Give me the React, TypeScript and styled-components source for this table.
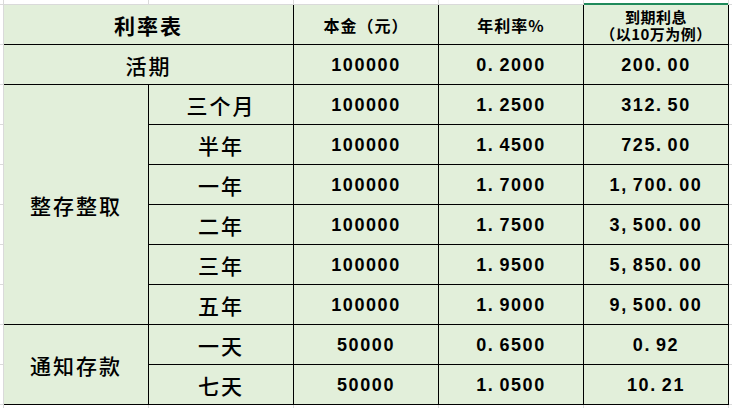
import React from 'react';
import styled, { createGlobalStyle } from 'styled-components';

const GlobalStyle = createGlobalStyle`
  html, body {
    margin: 0;
    padding: 0;
  }
  body {
    width: 732px;
    height: 408px;
    overflow: hidden;
    background-color: #ffffff;
    /* sheet gridlines around the table */
    background-image:
      repeating-linear-gradient(to right, #dadada 0 1px, transparent 1px 145px),
      repeating-linear-gradient(to bottom, #dadada 0 1px, transparent 1px 40px);
    background-position: 3px 0, 0 4px;
  }
`;

const Sheet = styled.div`
  padding: 5px 0 0 4px;
`;

const Table = styled.div`
  display: grid;
  grid-template-columns: repeat(5, 144px);
  grid-template-rows: repeat(10, 39px);
  gap: 1px;
  padding: 0 1px 1px 0;
  width: max-content;
  background-color: #000000;
`;

const Cell = styled.div<{ $col?: string; $row?: string; $selected?: boolean }>`
  grid-column: ${(p) => p.$col || 'auto'};
  grid-row: ${(p) => p.$row || 'auto'};
  background-color: #e2efda;
  display: flex;
  align-items: center;
  justify-content: center;
  text-align: center;
  color: #000000;
  box-shadow: ${(p) => (p.$selected ? '0 -2px 0 0 #1f8a5b' : 'none')};
`;

const Title = styled.span`
  font-family: 'Noto Sans CJK SC', sans-serif;
  font-size: 21px;
  font-weight: 700;
  letter-spacing: 2px;
`;

const Label = styled.span`
  font-family: 'Noto Sans CJK SC', sans-serif;
  font-size: 21px;
  font-weight: 500;
  letter-spacing: 2px;
`;

const Head = styled.span`
  font-family: 'Noto Sans CJK SC', sans-serif;
  font-size: 16px;
  font-weight: 700;
  letter-spacing: 1px;
`;

const HeadStack = styled.div`
  display: flex;
  flex-direction: column;
  font-family: 'Noto Sans CJK SC', sans-serif;
  font-size: 15px;
  font-weight: 700;
  line-height: 17px;
  letter-spacing: 0.5px;
`;

const Num = styled.span`
  font-family: 'Liberation Sans', Arial, sans-serif;
  font-size: 18px;
  font-weight: 700;
  letter-spacing: 1.6px;
  margin-top: 1px;
`;

const Punct = styled.span`
  margin-right: 5px;
`;

const Amount: React.FC<{ value: string }> = ({ value }) => (
  <Num>
    {value.split(/([.,])/).map((part, i) =>
      part === '.' || part === ',' ? <Punct key={i}>{part}</Punct> : part
    )}
  </Num>
);

type Row = { term: string; principal: string; rate: string; interest: string };

const fixed: Row[] = [
  { term: '三个月', principal: '100000', rate: '1.2500', interest: '312.50' },
  { term: '半年', principal: '100000', rate: '1.4500', interest: '725.00' },
  { term: '一年', principal: '100000', rate: '1.7000', interest: '1,700.00' },
  { term: '二年', principal: '100000', rate: '1.7500', interest: '3,500.00' },
  { term: '三年', principal: '100000', rate: '1.9500', interest: '5,850.00' },
  { term: '五年', principal: '100000', rate: '1.9000', interest: '9,500.00' },
];

const notice: Row[] = [
  { term: '一天', principal: '50000', rate: '0.6500', interest: '0.92' },
  { term: '七天', principal: '50000', rate: '1.0500', interest: '10.21' },
];

const renderRow = (r: Row, col: number) => (
  <React.Fragment key={r.term + r.principal}>
    <Cell $col={`${col}`}>
      <Label>{r.term}</Label>
    </Cell>
    <Cell>
      <Amount value={r.principal} />
    </Cell>
    <Cell>
      <Amount value={r.rate} />
    </Cell>
    <Cell>
      <Amount value={r.interest} />
    </Cell>
  </React.Fragment>
);

const App: React.FC = () => {
  return (
    <>
      <GlobalStyle />
      <Sheet>
        <Table>
          <Cell $col="1 / 3">
            <Title>利率表</Title>
          </Cell>
          <Cell>
            <Head>本金（元）</Head>
          </Cell>
          <Cell>
            <Head>年利率%</Head>
          </Cell>
          <Cell $selected>
            <HeadStack>
              <div>到期利息</div>
              <div>（以10万为例）</div>
            </HeadStack>
          </Cell>

          <Cell $col="1 / 3">
            <Label>活期</Label>
          </Cell>
          <Cell>
            <Amount value="100000" />
          </Cell>
          <Cell>
            <Amount value="0.2000" />
          </Cell>
          <Cell>
            <Amount value="200.00" />
          </Cell>

          <Cell $col="1" $row="3 / 9">
            <Label>整存整取</Label>
          </Cell>
          {fixed.map((r) => renderRow(r, 2))}

          <Cell $col="1" $row="9 / 11">
            <Label>通知存款</Label>
          </Cell>
          {notice.map((r) => renderRow(r, 2))}
        </Table>
      </Sheet>
    </>
  );
};

export default App;
